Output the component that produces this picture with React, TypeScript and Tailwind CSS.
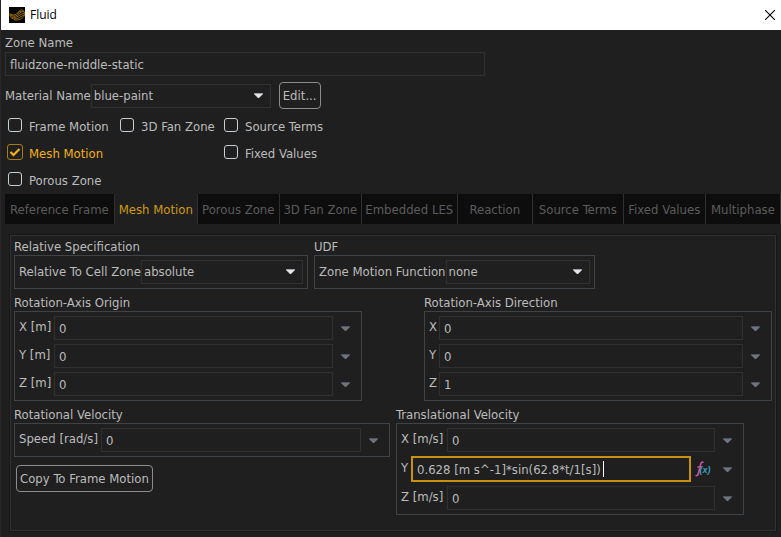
import { useState } from 'react';
import type { ReactNode } from 'react';
import clsx from 'clsx';

interface Option {
  name: string;
  cell: string;
}

interface RowProps {
  id: string;
  label: string;
  value: string;
  labelWidth: string;
}

const options: Option[] = [
  { name: 'Frame Motion', cell: 'col-start-1 row-start-1' },
  { name: '3D Fan Zone', cell: 'col-start-2 row-start-1' },
  { name: 'Source Terms', cell: 'col-start-3 row-start-1' },
  { name: 'Mesh Motion', cell: 'col-start-1 row-start-2' },
  { name: 'Fixed Values', cell: 'col-start-3 row-start-2' },
  { name: 'Porous Zone', cell: 'col-start-1 row-start-3' },
];

const tabs = [
  { name: 'Reference Frame', grow: 'grow-[110]' },
  { name: 'Mesh Motion', grow: 'grow-[83]' },
  { name: 'Porous Zone', grow: 'grow-[82]' },
  { name: '3D Fan Zone', grow: 'grow-[82]' },
  { name: 'Embedded LES', grow: 'grow-[96]' },
  { name: 'Reaction', grow: 'grow-[75]' },
  { name: 'Source Terms', grow: 'grow-[91]' },
  { name: 'Fixed Values', grow: 'grow-[82]' },
  { name: 'Multiphase', grow: 'grow-[75]' },
];

function Arrow({ className }: { className?: string }) {
  return (
    <svg viewBox="0 0 9 5" className={clsx('h-[5px] w-[9px]', className)} aria-hidden="true">
      <path d="M0 0h9v1L5 5H4L0 1z" fill="currentColor" />
      <path d="M0 0h9v1H0z" fill="#1f1f1f" opacity="0.35" />
    </svg>
  );
}

function Logo() {
  return (
    <svg viewBox="0 0 16 16" className="h-4 w-4" aria-hidden="true">
      <rect width="16" height="16" fill="#050505" />
      <g fill="none" stroke="#b98212" strokeWidth="0.8">
        <path d="M0 6.800c2.500.4 4 1.800 6 1S9.500 4.500 11.500 3.300c1.400-.7 2.600 0 3.500 1" />
        <path d="M.3 8c2.500.6 4 1.600 6.200 1S10.300 6.300 12 5l3-.7" />
        <path d="M1 9.600c2.500.8 4.500 1.200 6.500.4S11.500 7.500 15.300 6" />
        <path d="M2.500 11.200c2.500.9 4.500.9 6.500.1s3.500-2.400 6.300-3.300" />
        <path d="M5 12.700c2.500.6 4.500.3 6.500-.6 2-1 3.300-2.200 3.800-3.500V4.500" />
        <path d="M8.500 6.800c.8-1.300 2-2.300 3.500-2.600" />
      </g>
    </svg>
  );
}

function Group({ title, children }: { title: string; children: ReactNode }) {
  return (
    <div role="group" aria-label={title}>
      <div className="h-4 leading-4">{title}</div>
      <div className="flex flex-col gap-1 border border-[#3d4347] p-1">{children}</div>
    </div>
  );
}

function SelectRow({ id, label, value, width }: { id: string; label: string; value: string; width: string }) {
  return (
    <div className="flex items-center">
      <label htmlFor={id} className="whitespace-nowrap">
        {label}
      </label>
      <div className={clsx('relative', width)}>
        <select
          id={id}
          defaultValue={value}
          className="block h-6 w-full appearance-none border border-[#303030] bg-[#1f1f1f] px-[2px] outline-none"
        >
          <option>{value}</option>
        </select>
        <Arrow className="pointer-events-none absolute right-2 top-[9px] text-[#dfe4ea]" />
      </div>
    </div>
  );
}

function ValueRow({ id, label, value, labelWidth }: RowProps) {
  return (
    <div className="flex items-center">
      <label htmlFor={id} className={clsx('whitespace-nowrap pb-[3px]', labelWidth)}>
        {label}
      </label>
      <input
        id={id}
        defaultValue={value}
        className="h-6 min-w-0 flex-1 border border-[#303030] bg-transparent px-1 outline-none"
      />
      <button type="button" aria-label={`${label} options`} className="flex h-6 w-6 items-center justify-center text-[#6c7480]">
        <Arrow />
      </button>
    </div>
  );
}

function ExpressionRow({ id, label, value, labelWidth }: RowProps) {
  return (
    <div className="flex items-center">
      <label htmlFor={id} className={clsx('pb-[3px]', labelWidth)}>
        {label}
      </label>
      <div className="relative min-w-0 flex-1">
        <input
          id={id}
          defaultValue={value}
          className="block h-[26px] w-full border-2 border-[#c8920f] bg-transparent px-1 outline-none"
        />
        <span className="absolute left-[192px] top-[5px] h-4 w-px bg-white" />
      </div>
      <button type="button" aria-label="Expression" className="flex w-6 justify-center">
        <svg viewBox="0 0 16 16" className="h-4 w-4">
          <path
            d="M8.500 1.600C7.200.8 6.300 1.300 5.700 3L3.400 12.500C3 14.300 2 15 .6 14.200M2.400 6h4.200"
            fill="none"
            stroke="#c2519f"
            strokeWidth="1.700"
          />
          <text x="4.500" y="12" fontSize="9" fontStyle="italic" fontWeight="bold" fontFamily="Liberation Sans, sans-serif" fill="#3b9fc0">
            (x)
          </text>
        </svg>
      </button>
      <button type="button" aria-label={`${label} options`} className="flex h-6 w-6 items-center justify-center text-[#6c7480]">
        <Arrow />
      </button>
    </div>
  );
}

export default function App() {
  const [enabled, setEnabled] = useState<string[]>(['Mesh Motion']);
  const [tab, setTab] = useState('Mesh Motion');

  const toggle = (name: string) => {
    setEnabled((prev) => (prev.includes(name) ? prev.filter((n) => n !== name) : [...prev, name]));
  };

  return (
    <div className="min-h-screen border-l border-[#2b2625] bg-[#1f1f1f] font-['DejaVu_Sans_Condensed','DejaVu_Sans',sans-serif] text-[13px] leading-4 text-[#bcbcbc]">
      <header className="flex h-[30px] items-center bg-white px-2 text-black">
        <Logo />
        <h1 className="ml-[5px] flex-1 font-['Open_Sans',sans-serif] text-[12px]">Fluid</h1>
        <button type="button" aria-label="Close" className="-mr-2 flex h-[30px] w-[22px] items-center justify-center">
          <svg viewBox="0 0 10 10" className="h-[10px] w-[10px]">
            <path d="M0 0l10 10M10 0L0 10" stroke="#000" strokeWidth="1.100" />
          </svg>
        </button>
      </header>

      <main className="pl-1 pt-[5px]">
        <label htmlFor="zone-name" className="block h-[17px] leading-4">
          Zone Name
        </label>
        <input
          id="zone-name"
          defaultValue="fluidzone-middle-static"
          className="block h-6 w-[480px] max-w-full border border-[#303030] bg-transparent px-1 outline-none"
        />

        <div className="mt-[6px] flex items-center gap-2">
          <SelectRow id="material" label="Material Name" value="blue-paint" width="w-[180px]" />
          <button type="button" className="h-[27px] rounded border border-[#8c8c8c] px-[3px]">
            Edit...
          </button>
        </div>

        <div className="mt-1 grid grid-cols-[112px_104px_auto] pl-[2px]">
          {options.map(({ name, cell }) => {
            const on = enabled.includes(name);
            return (
              <label key={name} className={clsx('flex h-[27px] items-center gap-[6px]', cell, on && 'text-[#f3b01c]')}>
                <span className="relative mb-[3px] flex h-4 w-4 items-center justify-center">
                  <input
                    type="checkbox"
                    checked={on}
                    onChange={() => toggle(name)}
                    className="h-[14px] w-[14px] appearance-none rounded-[3px] border border-[#c9ced3] checked:h-4 checked:w-4 checked:border-[#a87a18]"
                  />
                  {on && (
                    <svg viewBox="0 0 16 16" className="pointer-events-none absolute inset-0 h-4 w-4">
                      <path d="M3.500 8l3 3 6-6" fill="none" stroke="#f3b01c" strokeWidth="2.200" />
                    </svg>
                  )}
                </span>
                {name}
              </label>
            );
          })}
        </div>

        <div role="tablist" className="flex h-[30px]">
          {tabs.map(({ name, grow }) => (
            <button
              key={name}
              type="button"
              role="tab"
              aria-selected={tab === name}
              onClick={() => setTab(name)}
              className={clsx(
                'basis-0 whitespace-nowrap border-r border-[#303030] pt-[2px]',
                grow,
                tab === name ? 'text-[#d09a18]' : 'bg-[#0d0d0d] text-[#5c5c5c]'
              )}
            >
              {name}
            </button>
          ))}
        </div>

        <section className="mx-[5px] mt-[11px] flex flex-col gap-[6px] border border-[#303030] px-[3px] pb-[15px] pt-[3px] shadow-[0_0_0_1px_#171717]">
          <div className="flex gap-[6px]">
            <Group title="Relative Specification">
              <SelectRow id="cell-zone" label="Relative To Cell Zone" value="absolute" width="w-[162px]" />
            </Group>
            <Group title="UDF">
              <SelectRow id="motion-function" label="Zone Motion Function" value="none" width="w-36" />
            </Group>
          </div>

          <div className="grid grid-cols-2 gap-[62px]">
            <Group title="Rotation-Axis Origin">
              <ValueRow id="origin-x" label="X [m]" value="0" labelWidth="w-[35px]" />
              <ValueRow id="origin-y" label="Y [m]" value="0" labelWidth="w-[35px]" />
              <ValueRow id="origin-z" label="Z [m]" value="0" labelWidth="w-[35px]" />
            </Group>
            <Group title="Rotation-Axis Direction">
              <ValueRow id="direction-x" label="X" value="0" labelWidth="w-[10px]" />
              <ValueRow id="direction-y" label="Y" value="0" labelWidth="w-[10px]" />
              <ValueRow id="direction-z" label="Z" value="1" labelWidth="w-[10px]" />
            </Group>
          </div>

          <div className="grid grid-cols-[376fr_348fr_22fr] gap-[6px]">
            <div>
              <Group title="Rotational Velocity">
                <ValueRow id="speed" label="Speed [rad/s]" value="0" labelWidth="w-[82px]" />
              </Group>
              <button type="button" className="ml-[2px] mt-2 h-[27px] rounded border border-[#8c8c8c] px-[3px]">
                Copy To Frame Motion
              </button>
            </div>
            <Group title="Translational Velocity">
              <ValueRow id="velocity-x" label="X [m/s]" value="0" labelWidth="w-[46px]" />
              <ExpressionRow
                id="velocity-y"
                label="Y"
                value="0.628 [m s^-1]*sin(62.8*t/1[s])"
                labelWidth="w-[10px]"
              />
              <ValueRow id="velocity-z" label="Z [m/s]" value="0" labelWidth="w-[46px]" />
            </Group>
          </div>
        </section>
      </main>
    </div>
  );
}
